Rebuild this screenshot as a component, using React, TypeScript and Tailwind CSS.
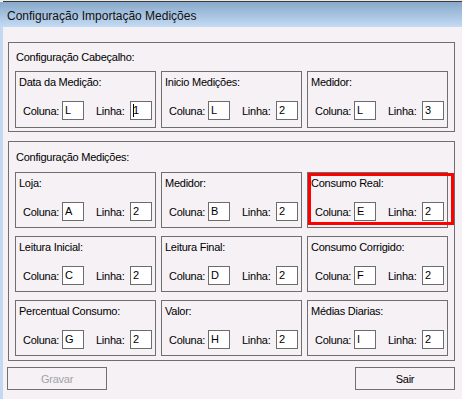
import React from 'react';

type FieldProps = {
  title: string;
  col: string;
  row: string;
  h?: string;
  caret?: boolean;
};

function Cell({ value, caret }: { value: string; caret?: boolean }) {
  return (
    <div className="relative w-[22px] h-[19px] border border-[#6c6c6c] bg-white pl-[2px] leading-[16px] text-black">
      {caret && <span className="absolute left-[2px] top-[2px] w-[1px] h-[13px] bg-black" />}
      {value}
    </div>
  );
}

function Field({ title, col, row, h = 'h-[56px]', caret }: FieldProps) {
  return (
    <div className={`${h} border border-[#6f6f6f] flex flex-col`}>
      <div className="pl-[3px] pt-[3px] leading-[14px]">{title}</div>
      <div className="mt-[12px] flex items-center pl-[7px]">
        <span className="w-[39px] leading-[14px] pt-[1px]">Coluna:</span>
        <Cell value={col} />
        <span className="ml-[12px] w-[34px] leading-[14px] pt-[1px]">Linha:</span>
        <Cell value={row} caret={caret} />
      </div>
    </div>
  );
}

const medicoes = [
  { title: 'Loja:', col: 'A', row: '2' },
  { title: 'Medidor:', col: 'B', row: '2' },
  { title: 'Consumo Real:', col: 'E', row: '2' },
  { title: 'Leitura Inicial:', col: 'C', row: '2' },
  { title: 'Leitura Final:', col: 'D', row: '2' },
  { title: 'Consumo Corrigido:', col: 'F', row: '2' },
  { title: 'Percentual Consumo:', col: 'G', row: '2' },
  { title: 'Valor:', col: 'H', row: '2' },
  { title: 'Médias Diarias:', col: 'I', row: '2' },
];

export default function App() {
  return (
    <div
      className="relative w-[462px] h-[399px] overflow-hidden bg-[#f5f1f5] flex flex-col text-[11px] tracking-[-0.25px] text-black"
      style={{ fontFamily: '"Liberation Sans", Arial, sans-serif' }}
    >
      {/* window edge */}
      <div className="h-[1px] bg-[#e8e8e8]" />
      <div className="h-[1px] ml-[3px] bg-[#3c3c3c]" />

      {/* Title bar */}
      <div className="h-[25px] flex items-center pl-[7px] pt-[2px] bg-gradient-to-b from-[#88a9ca] to-[#c4dbf4] text-[12px] tracking-normal text-[#111]">
        Configuração Importação Medições
      </div>

      <div className="flex flex-1">
        <div className="w-[3px] bg-[#c3d8f1]" />
        <div className="flex flex-col pl-[5px] pt-[15px]">
          {/* Cabeçalho */}
          <div className="w-[447px] border border-[#6f6f6f] pt-[7px] pb-[3px] px-[6px]">
            <div className="ml-[1px] leading-[14px]">Configuração Cabeçalho:</div>
            <div className="mt-[7px] grid grid-cols-[141px_141px_141px] gap-x-[5px]">
              <Field title="Data da Medição:" col="L" row="1" h="h-[57px]" caret />
              <Field title="Inicio Medições:" col="L" row="2" h="h-[57px]" />
              <Field title="Medidor:" col="L" row="3" h="h-[57px]" />
            </div>
          </div>

          {/* Medições */}
          <div className="mt-[9px] w-[447px] border border-[#6f6f6f] pt-[8px] pb-[4px] px-[6px]">
            <div className="ml-[1px] leading-[14px]">Configuração Medições:</div>
            <div className="mt-[8px] grid grid-cols-[141px_141px_141px] gap-x-[5px] gap-y-[8px]">
              {medicoes.map((m) => (
                <Field key={m.title} title={m.title} col={m.col} row={m.row} />
              ))}
            </div>
          </div>

          {/* Buttons */}
          <div className="mt-[6px] w-[447px] flex justify-between">
            <button className="-ml-[1px] w-[100px] h-[23px] border border-[#707070] bg-[#f5f1f5] text-[#a3a3a3] leading-[14px]">
              Gravar
            </button>
            <button className="w-[100px] h-[23px] border border-[#707070] bg-[#f5f1f5] text-black leading-[14px]">
              Sair
            </button>
          </div>
        </div>
      </div>

      {/* highlight annotation */}
      <div className="absolute left-[308px] top-[173px] w-[146px] h-[52px] border-[3px] border-[#ff0000] pointer-events-none" />
    </div>
  );
}
